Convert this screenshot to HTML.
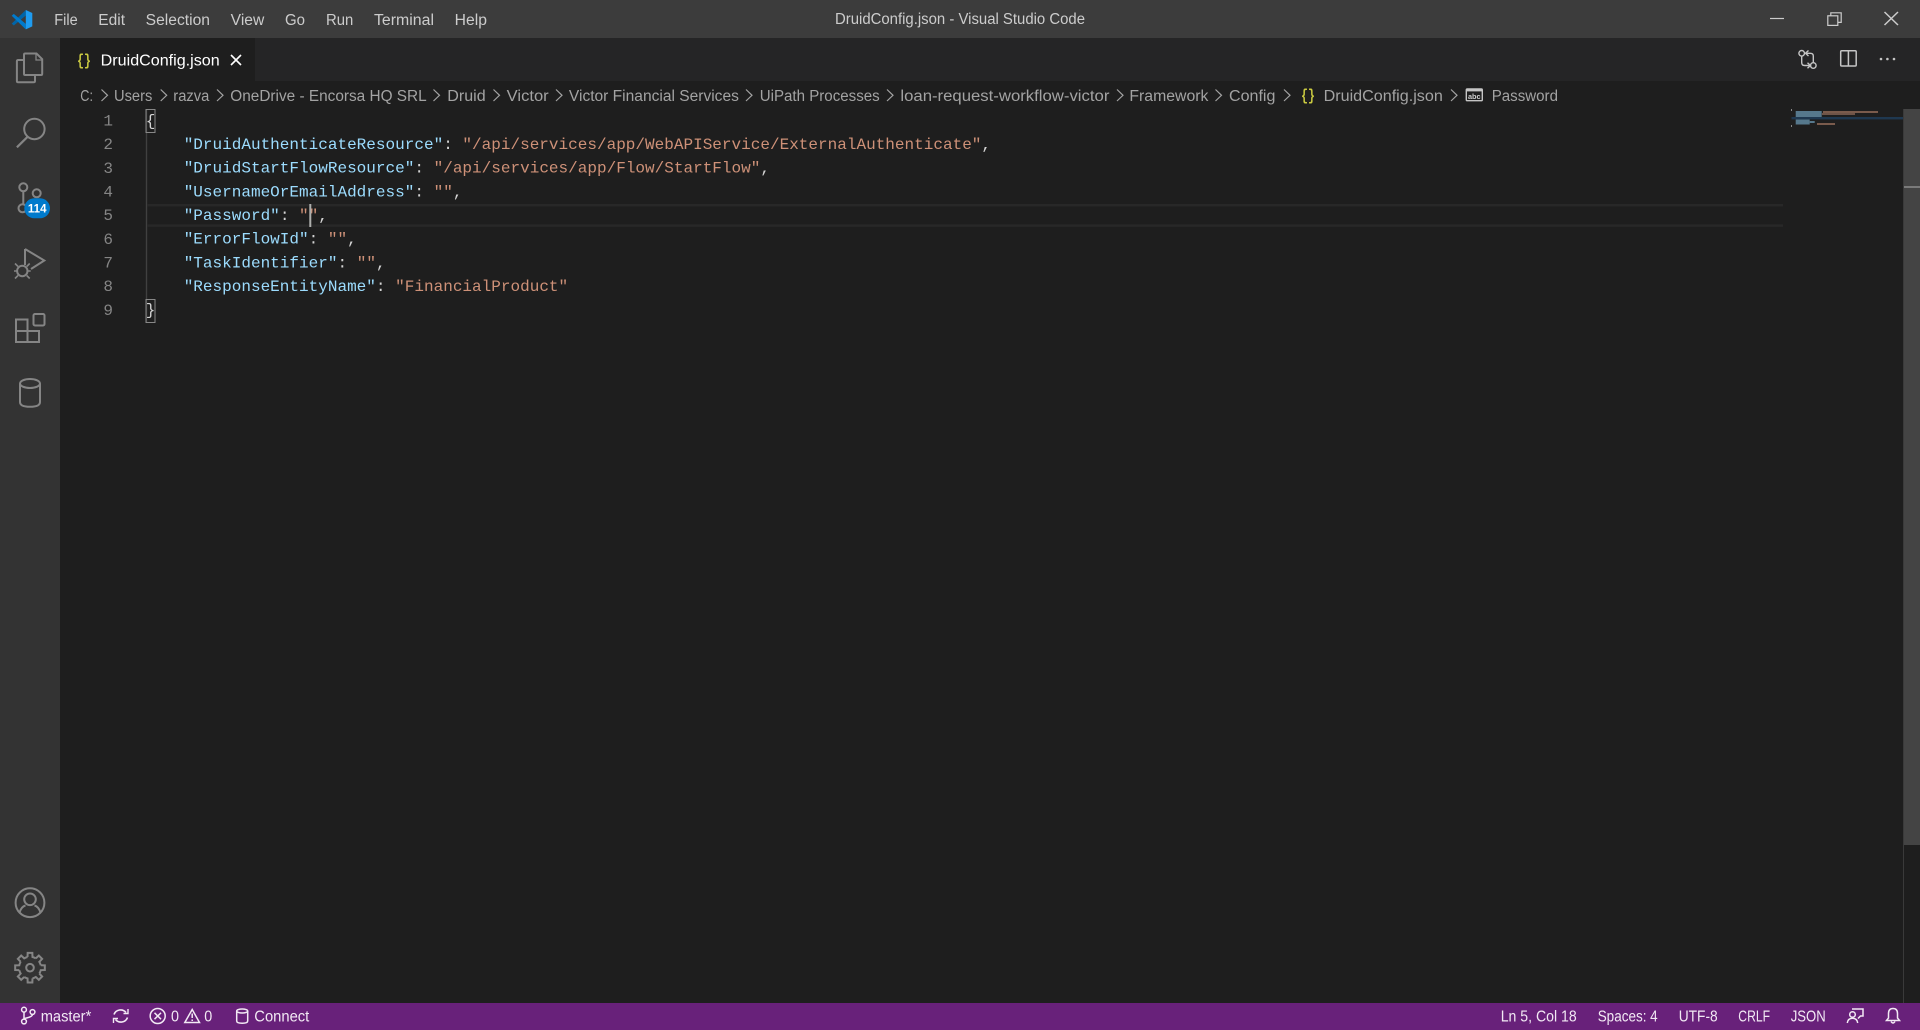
<!DOCTYPE html>
<html><head><meta charset="utf-8"><title>DruidConfig.json - Visual Studio Code</title>
<style>
html,body{margin:0;padding:0;background:#1e1e1e;width:1920px;height:1030px;overflow:hidden}
svg{display:block;position:absolute;left:0;top:0}
.u{font-family:"Liberation Sans",sans-serif;font-size:15.3px}
.m{font-family:"Liberation Mono",monospace;font-size:16.02px;white-space:pre}
.k{fill:#9cdcfe}.s{fill:#ce9178}.p{fill:#d4d4d4}
.n{fill:#858585;text-anchor:end}
.menu{fill:#cccccc}.bc{fill:#a3a3a3}.sb{fill:#f2e9f4}
.ic{fill:none;stroke:#858585;stroke-width:2}
.chev{fill:none;stroke:#a3a3a3;stroke-width:1.2}
.st{fill:none;stroke:#f2e9f4;stroke-width:1.5}
</style></head>
<body>
<svg width="1920" height="1030" viewBox="0 0 1920 1030" xmlns="http://www.w3.org/2000/svg">
<rect width="1920" height="1030" fill="#1e1e1e"/>
<rect width="1920" height="38" fill="#3c3c3c"/>
<rect x="0" y="38" width="60" height="965" fill="#333333"/>
<rect x="60" y="38" width="1860" height="43" fill="#252526"/>
<rect x="60" y="38" width="195" height="43" fill="#1e1e1e"/>
<rect y="1003" width="1920" height="27" fill="#68217a"/>

<!-- logo -->
<path d="M11.7 23.6L13.8 25.5L25.8 15.5V10Z" fill="#0065a9"/>
<path d="M11.7 15.8L13.8 13.9L25.8 23.9V29.4Z" fill="#007acc"/>
<path d="M25.8 10L32.3 13V26.4L25.8 29.4Z" fill="#1f9cf0"/>

<!-- menu -->
<g class="u menu">
<text x="54.3" y="25" textLength="23.4" lengthAdjust="spacingAndGlyphs">File</text>
<text x="98.3" y="25" textLength="26.7" lengthAdjust="spacingAndGlyphs">Edit</text>
<text x="145.7" y="25" textLength="64.3" lengthAdjust="spacingAndGlyphs">Selection</text>
<text x="230.7" y="25" textLength="33.6" lengthAdjust="spacingAndGlyphs">View</text>
<text x="285" y="25" textLength="20" lengthAdjust="spacingAndGlyphs">Go</text>
<text x="326" y="25" textLength="27.3" lengthAdjust="spacingAndGlyphs">Run</text>
<text x="374" y="25" textLength="60" lengthAdjust="spacingAndGlyphs">Terminal</text>
<text x="454.7" y="25" textLength="32.3" lengthAdjust="spacingAndGlyphs">Help</text>
<text x="835" y="24" textLength="250" lengthAdjust="spacingAndGlyphs">DruidConfig.json - Visual Studio Code</text>
</g>

<!-- window controls -->
<g fill="none" stroke="#cccccc" stroke-width="1.2">
<path d="M1770 18.5H1784"/>
<rect x="1827.8" y="15.8" width="10" height="9.6"/>
<path d="M1830.8 15.8V12.8H1841.2V22.4H1837.8"/>
<path d="M1884.5 12L1898 25M1898 12L1884.5 25" stroke-width="1.5"/>
</g>

<!-- tab -->
<text x="77" y="65" font-family="Liberation Mono,monospace" font-size="16" font-weight="bold" fill="#cbcb41" textLength="14" lengthAdjust="spacingAndGlyphs">{}</text>
<text class="u" x="100.7" y="65.7" fill="#ffffff" textLength="119" lengthAdjust="spacingAndGlyphs">DruidConfig.json</text>
<path d="M231 55L241 65M241 55L231 65" stroke="#ffffff" stroke-width="1.6" fill="none"/>

<!-- toolbar -->
<g fill="none" stroke="#c5c5c5" stroke-width="1.4">
<circle cx="1801.7" cy="53.3" r="2.8"/>
<circle cx="1813.3" cy="65.5" r="2.8"/>
<path d="M1801.7 56.2V62.5Q1801.7 65.5 1804.7 65.5H1810.3M1807.5 62.7L1810.5 65.5L1807.5 68.3"/>
<path d="M1813.3 62.6V56Q1813.3 53.3 1810.3 53.3H1805.5M1808.5 50.5L1805.5 53.3L1808.5 56"/>
<rect x="1840.7" y="50.7" width="15.5" height="15.3" rx="1" stroke-width="1.5"/>
<path d="M1848.4 50.7V66" stroke-width="1.5"/>
</g>
<g fill="#c5c5c5"><circle cx="1881" cy="59" r="1.3"/><circle cx="1887.4" cy="59" r="1.3"/><circle cx="1894" cy="59" r="1.3"/></g>

<!-- breadcrumbs -->
<g class="u bc">
<text x="80.3" y="101" textLength="12.7" lengthAdjust="spacingAndGlyphs">C:</text>
<text x="114" y="101" textLength="38.3" lengthAdjust="spacingAndGlyphs">Users</text>
<text x="173.3" y="101" textLength="36" lengthAdjust="spacingAndGlyphs">razva</text>
<text x="230.3" y="101" textLength="196.4" lengthAdjust="spacingAndGlyphs">OneDrive - Encorsa HQ SRL</text>
<text x="447.3" y="101" textLength="38.4" lengthAdjust="spacingAndGlyphs">Druid</text>
<text x="506.7" y="101" textLength="42" lengthAdjust="spacingAndGlyphs">Victor</text>
<text x="568.9" y="101" textLength="170" lengthAdjust="spacingAndGlyphs">Victor Financial Services</text>
<text x="759.7" y="101" textLength="120" lengthAdjust="spacingAndGlyphs">UiPath Processes</text>
<text x="900.4" y="101" textLength="209" lengthAdjust="spacingAndGlyphs">loan-request-workflow-victor</text>
<text x="1129.4" y="101" textLength="79" lengthAdjust="spacingAndGlyphs">Framework</text>
<text x="1229" y="101" textLength="46.4" lengthAdjust="spacingAndGlyphs">Config</text>
<text x="1323.6" y="101" textLength="119.2" lengthAdjust="spacingAndGlyphs">DruidConfig.json</text>
<text x="1491.7" y="101" textLength="66.3" lengthAdjust="spacingAndGlyphs">Password</text>
</g>
<g class="chev">
<path d="M101.5 89.5L107.5 95.3L101.5 101"/>
<path d="M160.7 89.5L166.7 95.3L160.7 101"/>
<path d="M217 89.5L223 95.3L217 101"/>
<path d="M433.5 89.5L439.5 95.3L433.5 101"/>
<path d="M493.5 89.5L499.5 95.3L493.5 101"/>
<path d="M556 89.5L562 95.3L556 101"/>
<path d="M746 89.5L752 95.3L746 101"/>
<path d="M887 89.5L893 95.3L887 101"/>
<path d="M1117 89.5L1123 95.3L1117 101"/>
<path d="M1215.5 89.5L1221.5 95.3L1215.5 101"/>
<path d="M1284 89.5L1290 95.3L1284 101"/>
<path d="M1451 89.5L1457 95.3L1451 101"/>
</g>
<text x="1301" y="100" font-family="Liberation Mono,monospace" font-size="16" font-weight="bold" fill="#cbcb41" textLength="14" lengthAdjust="spacingAndGlyphs">{}</text>
<rect x="1466.3" y="89" width="16" height="11.7" rx="1" fill="none" stroke="#c5c5c5" stroke-width="1.4"/>
<rect x="1466.3" y="89" width="16" height="2.4" fill="#c5c5c5"/>
<text x="1468" y="98.8" font-family="Liberation Sans,sans-serif" font-size="7.5" font-weight="bold" fill="#d0d0d0" textLength="12.6" lengthAdjust="spacingAndGlyphs">abc</text>

<!-- activity bar icons -->
<g class="ic">
<path d="M24 60H18.2Q16.9 60 16.9 61.3V81Q16.9 82.3 18.2 82.3H33.5Q35 82.3 35 81V75"/>
<path d="M25.2 53.5H36.5L42.2 59.2V73.7Q42.2 75 41 75H25.2Q24 75 24 73.7V54.7Q24 53.5 25.2 53.5Z"/>
<path d="M36 53.5V60H42.2" stroke-width="1.3"/>
<circle cx="34.4" cy="129" r="10.2"/>
<path d="M27.7 136.7L16.9 147.3" stroke-width="2.2"/>
<circle cx="23.3" cy="187.3" r="4"/>
<circle cx="36.7" cy="193.3" r="4"/>
<circle cx="22.5" cy="208.3" r="4"/>
<path d="M23.3 191.3V204.3"/>
<path d="M25 249V265M25 249L44.3 260.5L31 269"/>
<circle cx="22.3" cy="271" r="5.2"/>
<path d="M15 263.5L18 266.5M29.7 263.5L26.7 266.5M14 271H17M27.5 271H30.7M15 278.5L18 275.5M29.7 278.5L26.7 275.5" stroke-width="1.6"/>
<path d="M16 319.5H27.5V342H16ZM16 331H39V342H27.5"/>
<rect x="33.5" y="314" width="11" height="11.5" rx="1.5"/>
<ellipse cx="30" cy="383.5" rx="10" ry="4.5"/>
<path d="M20 383.5V402Q20 406.8 30 406.8Q40 406.8 40 402V383.5"/>
<circle cx="30" cy="902.7" r="14.4"/>
<circle cx="30" cy="899.3" r="5.8"/>
<path d="M19.5 912.5Q21.5 906.5 25.5 905.5M40.5 912.5Q38.5 906.5 34.5 905.5"/>
<circle cx="30" cy="967.7" r="3.8"/>
<g transform="translate(30 967.7)">
<path d="M-2.47 -10.72L-2.35 -14.82H2.35L2.47 -10.72A11 11 0 0 1 5.83 -9.33"/>
<path transform="rotate(45)" d="M-2.47 -10.72L-2.35 -14.82H2.35L2.47 -10.72A11 11 0 0 1 5.83 -9.33"/>
<path transform="rotate(90)" d="M-2.47 -10.72L-2.35 -14.82H2.35L2.47 -10.72A11 11 0 0 1 5.83 -9.33"/>
<path transform="rotate(135)" d="M-2.47 -10.72L-2.35 -14.82H2.35L2.47 -10.72A11 11 0 0 1 5.83 -9.33"/>
<path transform="rotate(180)" d="M-2.47 -10.72L-2.35 -14.82H2.35L2.47 -10.72A11 11 0 0 1 5.83 -9.33"/>
<path transform="rotate(225)" d="M-2.47 -10.72L-2.35 -14.82H2.35L2.47 -10.72A11 11 0 0 1 5.83 -9.33"/>
<path transform="rotate(270)" d="M-2.47 -10.72L-2.35 -14.82H2.35L2.47 -10.72A11 11 0 0 1 5.83 -9.33"/>
<path transform="rotate(315)" d="M-2.47 -10.72L-2.35 -14.82H2.35L2.47 -10.72A11 11 0 0 1 5.83 -9.33"/>
</g>
</g>
<rect x="24.3" y="198.3" width="25.7" height="20" rx="10" fill="#007acc"/>
<text x="37.2" y="212.3" font-family="Liberation Sans,sans-serif" font-size="11.5" font-weight="bold" fill="#ffffff" text-anchor="middle">114</text>

<!-- editor decorations -->
<path d="M146.5 109V322" stroke="#404040" stroke-width="1.4"/>
<rect x="147" y="204" width="1636" height="2.4" fill="#282828"/>
<rect x="147" y="224.4" width="1636" height="2.4" fill="#282828"/>
<rect x="146" y="109.5" width="9" height="23" fill="none" stroke="#888888" stroke-width="1"/>
<rect x="146" y="299.5" width="9" height="23" fill="none" stroke="#888888" stroke-width="1"/>

<!-- line numbers -->
<g class="m n">
<text x="113" y="125.5">1</text>
<text x="113" y="149.2">2</text>
<text x="113" y="172.9">3</text>
<text x="113" y="196.5">4</text>
<text x="113" y="220.2">5</text>
<text x="113" y="243.9">6</text>
<text x="113" y="267.5">7</text>
<text x="113" y="291.2">8</text>
<text x="113" y="314.9">9</text>
</g>

<!-- code -->
<g class="m">
<text x="145.7" y="125.3" class="p">{</text>
<text x="183.7" y="149"><tspan class="k">"DruidAuthenticateResource"</tspan><tspan class="p">: </tspan><tspan class="s">"/api/services/app/WebAPIService/ExternalAuthenticate"</tspan><tspan class="p">,</tspan></text>
<text x="183.7" y="172.7"><tspan class="k">"DruidStartFlowResource"</tspan><tspan class="p">: </tspan><tspan class="s">"/api/services/app/Flow/StartFlow"</tspan><tspan class="p">,</tspan></text>
<text x="183.7" y="196.3"><tspan class="k">"UsernameOrEmailAddress"</tspan><tspan class="p">: </tspan><tspan class="s">""</tspan><tspan class="p">,</tspan></text>
<text x="183.7" y="220"><tspan class="k">"Password"</tspan><tspan class="p">: </tspan><tspan class="s">""</tspan><tspan class="p">,</tspan></text>
<text x="183.7" y="243.7"><tspan class="k">"ErrorFlowId"</tspan><tspan class="p">: </tspan><tspan class="s">""</tspan><tspan class="p">,</tspan></text>
<text x="183.7" y="267.3"><tspan class="k">"TaskIdentifier"</tspan><tspan class="p">: </tspan><tspan class="s">""</tspan><tspan class="p">,</tspan></text>
<text x="183.7" y="291"><tspan class="k">"ResponseEntityName"</tspan><tspan class="p">: </tspan><tspan class="s">"FinancialProduct"</tspan></text>
<text x="145.7" y="314.7" class="p">}</text>
</g>
<rect x="309.3" y="204" width="2" height="23" fill="#aeafad"/>

<!-- minimap -->
<rect x="1791.5" y="117" width="111.5" height="2.4" fill="#1f3850"/>
<g>
<rect x="1791" y="109" width="1" height="2" fill="#888"/>
<rect x="1795.7" y="111" width="26" height="6" fill="#56788c"/>
<rect x="1823" y="111" width="55" height="2" fill="#7a5b4c"/>
<rect x="1822" y="113" width="33" height="2" fill="#6e5448"/>
<rect x="1795.7" y="119.5" width="14" height="5" fill="#56788c"/>
<rect x="1809.7" y="121" width="5" height="2" fill="#56788c"/>
<rect x="1817" y="123" width="18" height="2" fill="#7a5b4c"/>
<rect x="1791" y="125" width="1" height="2" fill="#888"/>
</g>

<!-- scrollbar -->
<path d="M1903.5 109V1003" stroke="#3a3a3a" stroke-width="1"/>
<rect x="1904" y="109" width="16" height="736" fill="#444444"/>
<rect x="1904" y="186" width="16" height="2" fill="#7a7a7a"/>

<!-- status bar -->
<g class="u sb">
<text x="40.7" y="1021.5" textLength="50.6" lengthAdjust="spacingAndGlyphs">master*</text>
<text x="171" y="1021.5" textLength="8" lengthAdjust="spacingAndGlyphs">0</text>
<text x="204.3" y="1021.5" textLength="8" lengthAdjust="spacingAndGlyphs">0</text>
<text x="254.3" y="1021.5" textLength="55" lengthAdjust="spacingAndGlyphs">Connect</text>
<text x="1500.7" y="1021.5" textLength="76" lengthAdjust="spacingAndGlyphs">Ln 5, Col 18</text>
<text x="1597.7" y="1021.5" textLength="60" lengthAdjust="spacingAndGlyphs">Spaces: 4</text>
<text x="1678.7" y="1021.5" textLength="39" lengthAdjust="spacingAndGlyphs">UTF-8</text>
<text x="1738.3" y="1021.5" textLength="31.7" lengthAdjust="spacingAndGlyphs">CRLF</text>
<text x="1790.7" y="1021.5" textLength="35" lengthAdjust="spacingAndGlyphs">JSON</text>
</g>
<g class="st">
<circle cx="24" cy="1009.7" r="2.4"/>
<circle cx="32.5" cy="1012" r="2.4"/>
<circle cx="24" cy="1021.5" r="2.4"/>
<path d="M24 1012V1019M32.5 1014.4Q32.5 1017 24 1018.5"/>
<path d="M114 1014.5A7 7 0 0 1 126 1012.5M127.5 1017.5A7 7 0 0 1 115.5 1019.5" stroke-width="1.6"/>
<path d="M123.5 1013.5H128V1009M118 1018.5H113.5V1023" stroke-width="1.4"/>
<circle cx="157.7" cy="1016" r="7.5"/>
<path d="M154.5 1012.8L161 1019.2M161 1012.8L154.5 1019.2"/>
<path d="M192.2 1009.5L199.5 1022.5H184.8Z"/>
<path d="M192.2 1013.5V1018M192.2 1019.5V1021"/>
<ellipse cx="242.2" cy="1011" rx="5.5" ry="2"/>
<path d="M236.7 1011V1021Q236.7 1023.2 242.2 1023.2Q247.7 1023.2 247.7 1021V1011"/>
<circle cx="1852.5" cy="1014.5" r="2.8"/>
<path d="M1847.3 1023Q1848 1018.3 1852.5 1018.3Q1857 1018.3 1857.7 1023"/>
<path d="M1852 1009H1863V1016H1860.5L1858 1018.5"/>
<path d="M1893 1008.5Q1888.5 1008.5 1888.5 1013.5V1018L1886.5 1020.5H1899.5L1897.5 1018V1013.5Q1897.5 1008.5 1893 1008.5Z"/>
<path d="M1891 1021.5Q1893 1024.5 1895 1021.5"/>
</g>
</svg>
</body></html>
